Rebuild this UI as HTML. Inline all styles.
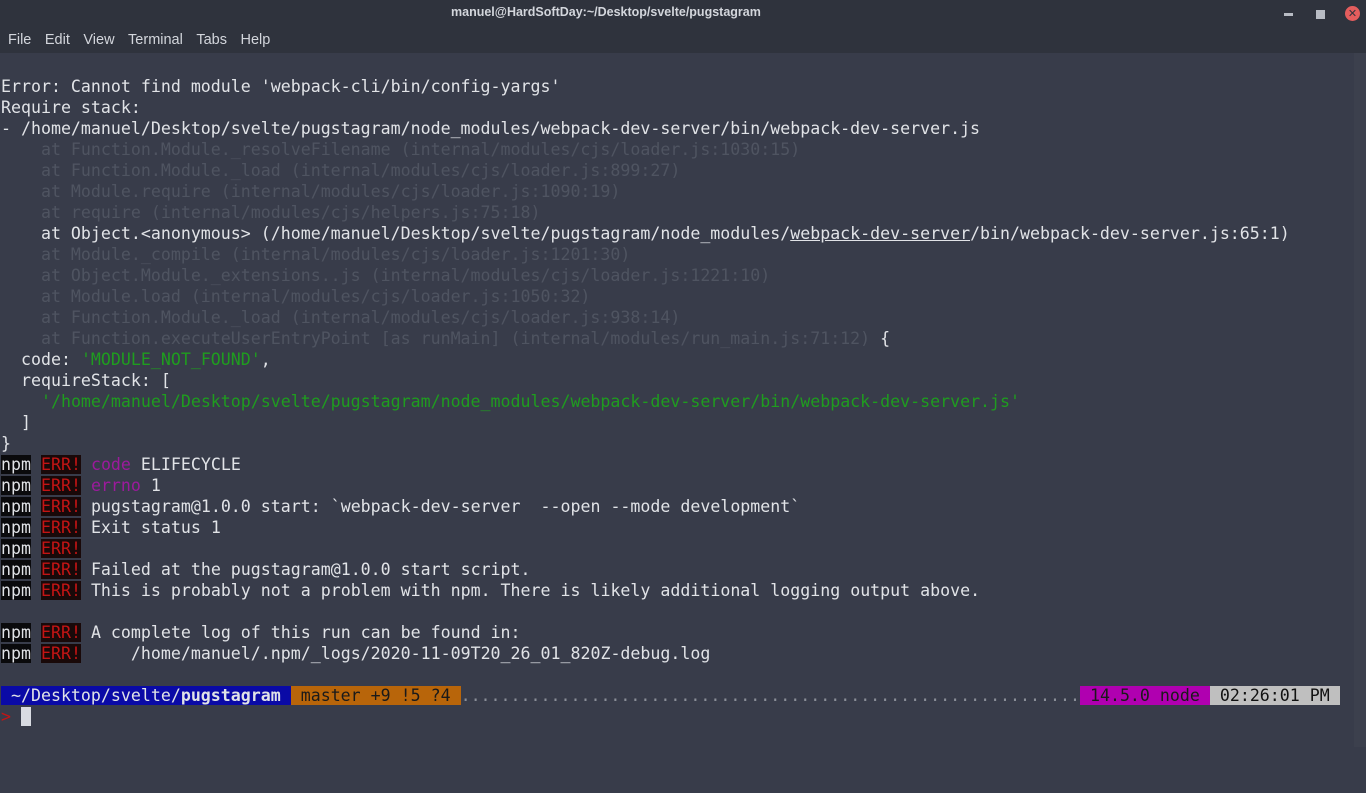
<!DOCTYPE html>
<html><head><meta charset="utf-8"><style>
html,body{margin:0;padding:0;width:1366px;height:747px;overflow:hidden;background:#383c4a;}
#tb{position:absolute;left:0;top:0;width:1366px;height:53px;background:#2f333d;}
#title{position:absolute;top:5px;left:0;width:1260px;color:#d3d6dc;font:bold 12.5px "Liberation Sans",sans-serif;}
#title span{position:absolute;left:451px;}
#menu{position:absolute;top:32px;left:8px;color:#d3d6dc;font:14.5px "Liberation Sans",sans-serif;}
#menu span{margin-right:13.5px}
#term{position:absolute;left:1px;top:75.5px;font-family:"DejaVu Sans Mono",monospace;font-size:16.6px;line-height:21px;color:#e1e3e7;white-space:pre;}
.d{color:#4f5461}.g{color:#1f9c1f}.p{color:#9c1a9c}
.n{background:#0a0a0c}.e{background:#190909;color:#c41414}
.u{text-decoration:underline}
#sb{position:absolute;left:1354px;top:53px;width:12px;height:694px;background:#3c404d}
#th{position:absolute;left:1358px;top:560px;width:4px;height:180px;background:#6a6e7a;border-radius:2px}
</style></head><body>
<div id="tb">
<div id="title"><span>manuel@HardSoftDay:~/Desktop/svelte/pugstagram</span></div>
<div id="menu"><span>File</span><span>Edit</span><span>View</span><span>Terminal</span><span>Tabs</span><span>Help</span></div>
<div style="position:absolute;left:1284px;top:13px;width:9px;height:3px;background:#b8bcc4"></div>
<div style="position:absolute;left:1316px;top:10px;width:9px;height:9px;background:#b8bcc4"></div>
<div style="position:absolute;left:1345px;top:6px;width:15px;height:15px;border-radius:50%;background:#e45d5d;color:#2f333d;font:bold 11px 'DejaVu Sans',sans-serif;text-align:center;line-height:15px">✕</div>
</div>
<div id="sb"><div id="th"></div></div>
<div id="term">Error: Cannot find module 'webpack-cli/bin/config-yargs'
Require stack:
- /home/manuel/Desktop/svelte/pugstagram/node_modules/webpack-dev-server/bin/webpack-dev-server.js
<span class="d">    at Function.Module._resolveFilename (internal/modules/cjs/loader.js:1030:15)
    at Function.Module._load (internal/modules/cjs/loader.js:899:27)
    at Module.require (internal/modules/cjs/loader.js:1090:19)
    at require (internal/modules/cjs/helpers.js:75:18)</span>
    at Object.&lt;anonymous&gt; (/home/manuel/Desktop/svelte/pugstagram/node_modules/<span class="u">webpack-dev-server</span>/bin/webpack-dev-server.js:65:1)
<span class="d">    at Module._compile (internal/modules/cjs/loader.js:1201:30)
    at Object.Module._extensions..js (internal/modules/cjs/loader.js:1221:10)
    at Module.load (internal/modules/cjs/loader.js:1050:32)
    at Function.Module._load (internal/modules/cjs/loader.js:938:14)
    at Function.executeUserEntryPoint [as runMain] (internal/modules/run_main.js:71:12)</span> {
  code: <span class="g">'MODULE_NOT_FOUND'</span>,
  requireStack: [
    <span class="g">'/home/manuel/Desktop/svelte/pugstagram/node_modules/webpack-dev-server/bin/webpack-dev-server.js'</span>
  ]
}
<span class="n">npm</span> <span class="e">ERR!</span> <span class="p">code</span> ELIFECYCLE
<span class="n">npm</span> <span class="e">ERR!</span> <span class="p">errno</span> 1
<span class="n">npm</span> <span class="e">ERR!</span> pugstagram@1.0.0 start: `webpack-dev-server  --open --mode development`
<span class="n">npm</span> <span class="e">ERR!</span> Exit status 1
<span class="n">npm</span> <span class="e">ERR!</span>
<span class="n">npm</span> <span class="e">ERR!</span> Failed at the pugstagram@1.0.0 start script.
<span class="n">npm</span> <span class="e">ERR!</span> This is probably not a problem with npm. There is likely additional logging output above.

<span class="n">npm</span> <span class="e">ERR!</span> A complete log of this run can be found in:
<span class="n">npm</span> <span class="e">ERR!</span>     /home/manuel/.npm/_logs/2020-11-09T20_26_01_820Z-debug.log

<span style="background:#0a0aa6;color:#e1e3e7"> ~/Desktop/svelte/<b>pugstagram</b> </span><span style="background:#b8650a;color:#1a1a1a"> master +9 !5 ?4 </span><span style="color:#8a8e98">..............................................................</span><span style="background:#b000b0;color:#1a1a1a"> 14.5.0 node </span><span style="background:#bfbfbf;color:#111"> 02:26:01 PM </span>
<span style="color:#c41414">&gt;</span> <span style="background:#d8dbe2"> </span></div>
</body></html>
